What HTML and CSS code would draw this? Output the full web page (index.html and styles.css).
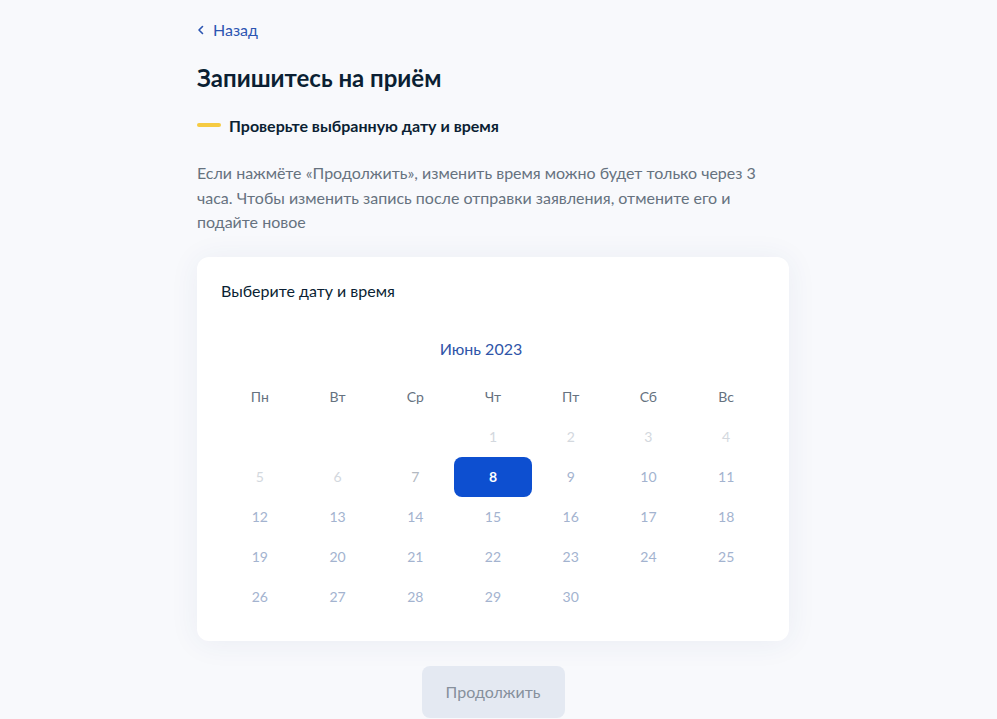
FILE: index.html
```html
<!DOCTYPE html>
<html lang="ru">
<head>
<meta charset="utf-8">
<title>Запишитесь на приём</title>
<link rel="stylesheet" href="styles.css">
</head>
<body>
<main class="page">
  <a class="back" href="#">
    <svg class="back-icon" width="8" height="10" viewBox="0 0 8 10" aria-hidden="true">
      <path d="M5.5 1.5 L2 5 L5.5 8.5" fill="none" stroke="currentColor" stroke-width="1.6" stroke-linecap="round" stroke-linejoin="round"/>
    </svg>
    <span>Назад</span>
  </a>

  <h1 class="title">Запишитесь на приём</h1>

  <div class="step">
    <span class="step-mark"></span>
    <span class="step-text">Проверьте выбранную дату и время</span>
  </div>

  <p class="note">Если нажмёте «Продолжить», изменить время можно будет только через 3 часа. Чтобы изменить запись после отправки заявления, отмените его и подайте новое</p>

  <section class="card">
    <div class="card-title">Выберите дату и время</div>
    <div class="month">Июнь 2023</div>
    <div class="calendar">
      <div class="wd">Пн</div><div class="wd">Вт</div><div class="wd">Ср</div><div class="wd">Чт</div><div class="wd">Пт</div><div class="wd">Сб</div><div class="wd">Вс</div>

      <div class="day"></div><div class="day"></div><div class="day"></div>
      <div class="day off">1</div><div class="day off">2</div><div class="day off">3</div><div class="day off">4</div>

      <div class="day off">5</div><div class="day off">6</div><div class="day near">7</div>
      <div class="day selected">8</div><div class="day">9</div><div class="day">10</div><div class="day">11</div>

      <div class="day">12</div><div class="day">13</div><div class="day">14</div><div class="day">15</div><div class="day">16</div><div class="day">17</div><div class="day">18</div>

      <div class="day">19</div><div class="day">20</div><div class="day">21</div><div class="day">22</div><div class="day">23</div><div class="day">24</div><div class="day">25</div>

      <div class="day">26</div><div class="day">27</div><div class="day">28</div><div class="day">29</div><div class="day">30</div><div class="day"></div><div class="day"></div>
    </div>
  </section>

  <div class="actions">
    <button class="btn" type="button" disabled>Продолжить</button>
  </div>
</main>
</body>
</html>
```

FILE: styles.css
```css
html, body {
  margin: 0;
  padding: 0;
}

body {
  background: #f8f9fc;
  font-family: Lato, "Noto Sans", "Liberation Sans", sans-serif;
  color: #0b1f33;
}

.page {
  width: 603px;
  margin: 0 auto;
  padding-top: 19px;
  box-sizing: border-box;
}

.back {
  display: inline-flex;
  align-items: center;
  gap: 8px;
  color: #2c55b2;
  text-decoration: none;
  font-size: 16px;
  line-height: 20px;
}

.back-icon {
  display: block;
}

.title {
  margin: 22px 0 0;
  font-size: 24px;
  line-height: 32px;
  font-weight: 700;
  color: #0b1f33;
}

.step {
  display: flex;
  align-items: center;
  gap: 8px;
  margin-top: 19px;
  height: 24px;
}

.step-mark {
  width: 24px;
  height: 4px;
  border-radius: 2px;
  background: #f6cb42;
}

.step-text {
  font-size: 16px;
  font-weight: 700;
  color: #0b1f33;
}

.note {
  margin: 24px 0 0;
  max-width: 570px;
  font-size: 16px;
  line-height: 24.5px;
  color: #66727f;
}

.card {
  width: 592px;
  box-sizing: border-box;
  margin-top: 22px;
  padding: 24px;
  background: #ffffff;
  border-radius: 12px;
  box-shadow: 0 2px 30px rgba(40, 70, 130, 0.07);
}

.card-title {
  font-size: 16px;
  line-height: 20px;
  color: #0b1f33;
}

.month {
  margin-top: 38px;
  padding-right: 24px;
  text-align: center;
  font-size: 16px;
  line-height: 20px;
  color: #2f55a8;
}

.calendar {
  display: grid;
  grid-template-columns: repeat(7, 1fr);
  grid-auto-rows: 40px;
  margin-top: 18px;
}

.wd,
.day {
  display: flex;
  align-items: center;
  justify-content: center;
  font-size: 14px;
}

.wd {
  color: #66727f;
}

.day {
  color: #a3b3cf;
}

.day.off {
  color: #d3d8de;
}

.day.near {
  color: #b3b9c1;
}

.day.selected {
  background: #0d4fd0;
  color: #ffffff;
  font-weight: 700;
  border-radius: 8px;
}

.actions {
  width: 592px;
  display: flex;
  justify-content: center;
  margin-top: 25px;
}

.btn {
  width: 143px;
  height: 52px;
  border: none;
  border-radius: 8px;
  background: #e4e9f2;
  color: #86909c;
  font-family: inherit;
  font-size: 16px;
}
```
